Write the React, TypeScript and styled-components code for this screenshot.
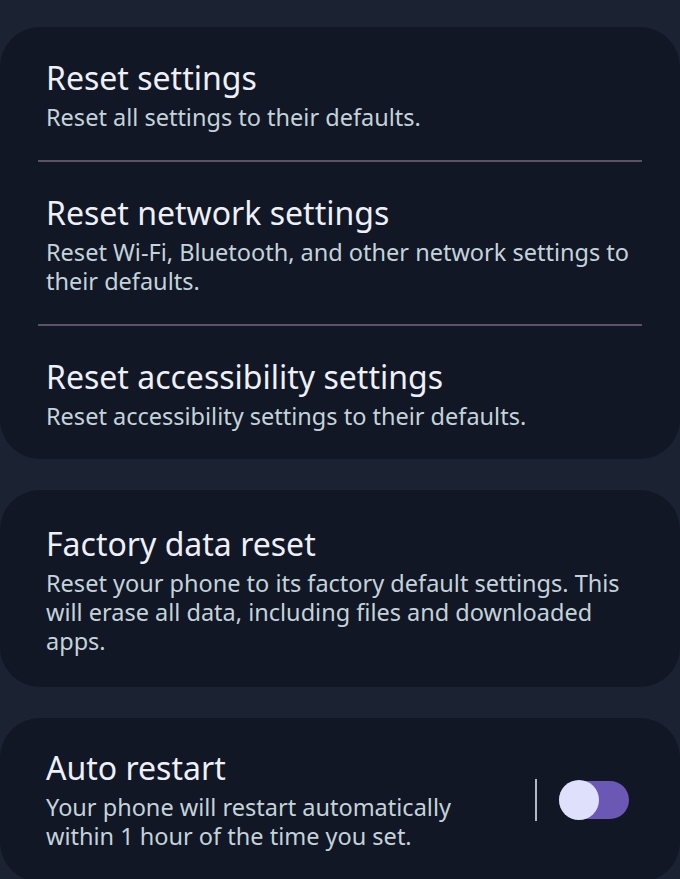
import React, { useState } from "react";
import styled, { createGlobalStyle } from "styled-components";

const GlobalStyle = createGlobalStyle`
  html, body {
    margin: 0;
    padding: 0;
    background: #1b2232;
  }
  body {
    font-family: "Noto Sans", "Open Sans", sans-serif;
    -webkit-font-smoothing: antialiased;
  }
`;

interface SettingItem {
  title: string;
  description: string;
}

const resetItems: SettingItem[] = [
  { title: "Reset settings", description: "Reset all settings to their defaults." },
  {
    title: "Reset network settings",
    description: "Reset Wi-Fi, Bluetooth, and other network settings to their defaults.",
  },
  {
    title: "Reset accessibility settings",
    description: "Reset accessibility settings to their defaults.",
  },
];

function Toggle({ on, onChange }: { on: boolean; onChange: () => void }) {
  return (
    <Track $on={on} onClick={onChange} role="switch" aria-checked={on}>
      <Thumb $on={on} />
    </Track>
  );
}

function App() {
  const [autoRestart, setAutoRestart] = useState(false);

  return (
    <>
      <GlobalStyle />
      <Page>
        <Card>
          {resetItems.map((item, i) => (
            <React.Fragment key={item.title}>
              {i > 0 && <Divider />}
              <Row>
                <TextBlock>
                  <Title>{item.title}</Title>
                  <Description>{item.description}</Description>
                </TextBlock>
              </Row>
            </React.Fragment>
          ))}
        </Card>

        <Card>
          <Row $padding="34px 51px 31px 46px">
            <TextBlock>
              <Title>Factory data reset</Title>
              <Description>
                Reset your phone to its factory default settings. This will erase all data,
                including files and downloaded apps.
              </Description>
            </TextBlock>
          </Row>
        </Card>

        <Card>
          <Row $padding="30px 51px 31px 46px">
            <TextBlock $narrow>
              <Title>Auto restart</Title>
              <Description>
                Your phone will restart automatically within 1 hour of the time you set.
              </Description>
            </TextBlock>
            <SwitchArea>
              <VerticalBar />
              <Toggle on={autoRestart} onChange={() => setAutoRestart(!autoRestart)} />
            </SwitchArea>
          </Row>
        </Card>
      </Page>
    </>
  );
}

export default App;

const Page = styled.div`
  display: flex;
  flex-direction: column;
  gap: 31px;
  padding-top: 27px;
  min-height: 879px;
  box-sizing: border-box;
  overflow: hidden;
`;

const Card = styled.section`
  background: #111725;
  border-radius: 40px;
  display: flex;
  flex-direction: column;
`;

const Row = styled.div<{ $padding?: string }>`
  display: flex;
  align-items: center;
  padding: ${(p) => p.$padding ?? "31px 46px 28px 46px"};
`;

const TextBlock = styled.div<{ $narrow?: boolean }>`
  flex: ${(p) => (p.$narrow ? "0 1 440px" : "1 1 auto")};
  min-width: 0;
`;

const Title = styled.div`
  color: #eef0f8;
  font-size: 32px;
  line-height: 40px;
  font-weight: 400;
`;

const Description = styled.div`
  color: #c4d3da;
  font-size: 23.5px;
  line-height: 29px;
  margin-top: 5px;
`;

const Divider = styled.hr`
  border: none;
  height: 2px;
  margin: 0 38px;
  background: #5a5367;
`;

const SwitchArea = styled.div`
  margin-left: auto;
  display: flex;
  align-items: center;
  gap: 22px;
`;

const VerticalBar = styled.div`
  width: 2px;
  height: 42px;
  background: #b4b8c2;
`;

const Track = styled.div<{ $on: boolean }>`
  position: relative;
  width: 70px;
  height: 38px;
  border-radius: 19px;
  background: ${(p) => (p.$on ? "#3a3f55" : "#6a58b4")};
  cursor: pointer;
`;

const Thumb = styled.div<{ $on: boolean }>`
  position: absolute;
  top: -1px;
  left: ${(p) => (p.$on ? "30px" : "0")};
  width: 40px;
  height: 40px;
  border-radius: 50%;
  background: #dfe0fb;
`;
